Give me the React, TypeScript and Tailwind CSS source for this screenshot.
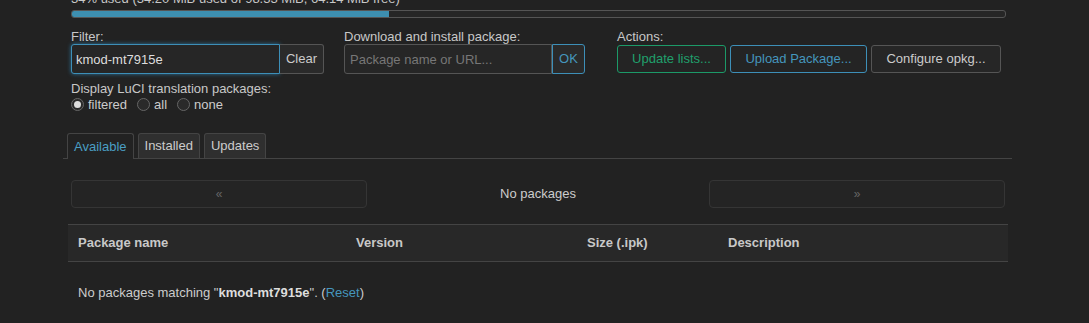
import React from 'react';

const Radio = ({ checked, label }: { checked?: boolean; label: string }) => (
  <label className="flex items-center mr-[10px]">
    <span className="w-[13px] h-[13px] rounded-full border border-[#666] flex items-center justify-center bg-[#2a2a2a]">
      {checked && <span className="w-[7px] h-[7px] rounded-full bg-[#ddd]" />}
    </span>
    <span className="ml-[4px]">{label}</span>
  </label>
);

const App = () => {
  return (
    <div className="w-[1089px] h-[323px] overflow-hidden bg-[#222222] text-[#cccccc] text-[13px] font-['Liberation_Sans',Arial,sans-serif]">
      {/* storage usage */}
      <div className="pl-[71px] w-[1006px]">
        <div className="mt-[-9px] leading-[16px] text-[#c8c8c8]">34% used (34.20 MiB used of 98.33 MiB, 64.14 MiB free)</div>
        <div className="mt-[3px] h-[8px] rounded-[3px] border border-[#555] bg-[#262626] overflow-hidden">
          <div className="h-full bg-[#3d8fb0]" style={{ width: '34%' }} />
        </div>
      </div>

      {/* controls */}
      <div className="flex pl-[71px] mt-[12px]">
        <div className="w-[253px]">
          <div className="leading-[14px] h-[14px] text-[#c8c8c8]">Filter:</div>
          <div className="flex h-[30px]">
            <input
              readOnly
              value="kmod-mt7915e"
              className="w-[209px] h-full px-[4px] bg-[#262626] text-[#dddddd] text-[13px] border border-[#3d8fb8] rounded-l-[3px] outline-none shadow-[0_0_4px_#2c6f95]"
            />
            <button className="w-[44px] h-full border border-l-0 border-[#555] rounded-r-[3px] bg-[#2a2a2a] text-[#cccccc]">Clear</button>
          </div>
        </div>
        <div className="w-[241px] ml-[20px]">
          <div className="leading-[14px] h-[14px] text-[#c8c8c8]">Download and install package:</div>
          <div className="flex h-[30px]">
            <input
              readOnly
              placeholder="Package name or URL..."
              className="w-[208px] h-full px-[5px] bg-[#262626] text-[13px] border border-[#555] rounded-l-[3px] outline-none placeholder:text-[#777]"
            />
            <button className="w-[33px] h-full border border-[#3d8fb8] rounded-r-[3px] bg-[#2a2a2a] text-[#4596bd]">OK</button>
          </div>
        </div>
        <div className="ml-[32px]">
          <div className="leading-[14px] h-[14px] text-[#c8c8c8]">Actions:</div>
          <div className="flex gap-[4px] mt-[1px]">
            <button className="w-[109px] h-[28px] border border-[#1c9a68] rounded-[3px] bg-[#242424] text-[#20a06c]">Update lists...</button>
            <button className="w-[137px] h-[28px] border border-[#3d8fb8] rounded-[3px] bg-[#242424] text-[#4596bd]">Upload Package...</button>
            <button className="w-[130px] h-[28px] border border-[#555] rounded-[3px] bg-[#262626] text-[#cccccc]">Configure opkg...</button>
          </div>
        </div>
      </div>

      <div className="pl-[71px] mt-[7px]">
        <div className="leading-[15px] text-[#c8c8c8]">Display LuCI translation packages:</div>
        <div className="flex items-center mt-[1px] leading-[15px]">
          <Radio checked label="filtered" />
          <Radio label="all" />
          <Radio label="none" />
        </div>
      </div>

      {/* tabs */}
      <div className="ml-[63px] w-[949px] mt-[21px] flex items-end gap-[4px] pl-[4px] border-b border-[#444] h-[26px]">
        <div className="h-[26px] px-[6px] flex items-center border border-b-0 border-[#444] rounded-t-[3px] bg-[#222] text-[#4a9fc4] mb-[-1px] text-[13px]">Available</div>
        <div className="h-[25px] px-[6px] flex items-center border border-b-0 border-[#444] rounded-t-[3px] bg-[#2f2f2f] text-[13px]">Installed</div>
        <div className="h-[25px] px-[6px] flex items-center border border-b-0 border-[#444] rounded-t-[3px] bg-[#2f2f2f] text-[13px]">Updates</div>
      </div>

      {/* pager */}
      <div className="ml-[71px] w-[934px] mt-[21px] flex items-center h-[28px]">
        <div className="w-[296px] h-full border border-[#353535] rounded-[4px] bg-[#242424] flex items-center justify-center text-[#666] text-[12px]">«</div>
        <div className="flex-1 text-center">No packages</div>
        <div className="w-[296px] h-full border border-[#353535] rounded-[4px] bg-[#242424] flex items-center justify-center text-[#666] text-[12px]">»</div>
      </div>

      {/* table */}
      <div className="ml-[68px] w-[940px] mt-[16px]">
        <div className="grid grid-cols-[278px_231px_141px_290px] h-[38px] items-center bg-[#282828] border-y border-[#444] font-bold text-[#c8c8c8]">
          <div className="pl-[10px]">Package name</div>
          <div className="pl-[10px]">Version</div>
          <div className="pl-[10px]">Size (.ipk)</div>
          <div className="pl-[10px]">Description</div>
        </div>
        <div className="pl-[10px] pt-[23px] leading-[15px]">
          No packages matching "<b className="text-[#dddddd]">kmod-mt7915e</b>". (<span className="text-[#4596bd]">Reset</span>)
        </div>
      </div>
    </div>
  );
};

export default App;
